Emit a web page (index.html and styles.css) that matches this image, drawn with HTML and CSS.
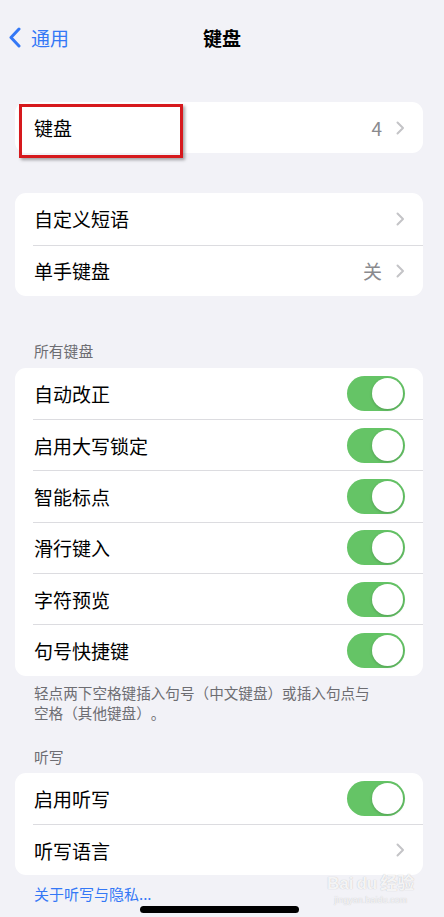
FILE: index.html
```html
<!DOCTYPE html>
<html lang="zh-CN">
<head>
  <meta charset="UTF-8" />
  <meta name="viewport" content="width=device-width, initial-scale=1" />
  <title>键盘</title>
  <link rel="stylesheet" href="styles.css">
</head>
<body>
  <header class="nav">
    <a class="back" href="#">
      <svg width="13" height="21" viewBox="0 0 13 21"><path d="M11 2 L3 10.5 L11 19" fill="none" stroke="#3478f6" stroke-width="3" stroke-linecap="round" stroke-linejoin="round"/></svg>
      <span>通用</span>
    </a>
    <h1>键盘</h1>
    <span></span>
  </header>

  <section class="group first">
    <div class="row">
      <span class="label">键盘</span>
      <span class="value">4</span>
      <svg class="chev" width="9" height="14" viewBox="0 0 9 14"><path d="M1.5 1.5 L7 7 L1.5 12.5" fill="none" stroke="#c4c4c7" stroke-width="2" stroke-linecap="round" stroke-linejoin="round"/></svg>
    </div>
    <div class="mark"></div>
  </section>

  <section class="group spaced">
    <div class="row">
      <span class="label">自定义短语</span>
      <svg class="chev" width="9" height="14" viewBox="0 0 9 14"><path d="M1.5 1.5 L7 7 L1.5 12.5" fill="none" stroke="#c4c4c7" stroke-width="2" stroke-linecap="round" stroke-linejoin="round"/></svg>
    </div>
    <div class="row">
      <span class="label">单手键盘</span>
      <span class="value">关</span>
      <svg class="chev" width="9" height="14" viewBox="0 0 9 14"><path d="M1.5 1.5 L7 7 L1.5 12.5" fill="none" stroke="#c4c4c7" stroke-width="2" stroke-linecap="round" stroke-linejoin="round"/></svg>
    </div>
  </section>

  <h2 class="section-title">所有键盘</h2>
  <section class="group">
    <div class="row"><span class="label">自动改正</span><span class="toggle"></span></div>
    <div class="row"><span class="label">启用大写锁定</span><span class="toggle"></span></div>
    <div class="row"><span class="label">智能标点</span><span class="toggle"></span></div>
    <div class="row"><span class="label">滑行键入</span><span class="toggle"></span></div>
    <div class="row"><span class="label">字符预览</span><span class="toggle"></span></div>
    <div class="row"><span class="label">句号快捷键</span><span class="toggle"></span></div>
  </section>
  <p class="note">轻点两下空格键插入句号（中文键盘）或插入句点与<br>空格（其他键盘）。</p>

  <h2 class="section-title after-note">听写</h2>
  <section class="group">
    <div class="row"><span class="label">启用听写</span><span class="toggle"></span></div>
    <div class="row">
      <span class="label">听写语言</span>
      <svg class="chev" width="9" height="14" viewBox="0 0 9 14"><path d="M1.5 1.5 L7 7 L1.5 12.5" fill="none" stroke="#c4c4c7" stroke-width="2" stroke-linecap="round" stroke-linejoin="round"/></svg>
    </div>
  </section>
  <a class="link" href="#">关于听写与隐私...</a>

  <div class="watermark">
    <span class="wm-logo">Bai<b>du</b>经验</span>
    <span class="wm-url">jingyan.baidu.com</span>
  </div>
  <div class="home"></div>
</body>
</html>
```

FILE: styles.css
```css
body {
  margin: 0;
  width: 444px;
  min-height: 917px;
  position: relative;
  background-color: #f2f2f7;
  color: #000;
  font-family: "Noto Sans CJK SC", "Noto Sans", sans-serif;
  font-size: 19px;
  overflow: hidden;
  text-spacing-trim: space-all;
}
.nav {
  height: 74px;
  display: grid;
  grid-template-columns: 1fr auto 1fr;
  align-items: center;
}
.back {
  display: flex;
  align-items: center;
  gap: 10px;
  padding-left: 8px;
  color: #3478f6;
  text-decoration: none;
  font-size: 19px;
}
.nav h1 {
  margin: 0;
  font-size: 19px;
  font-weight: 600;
}
.group {
  position: relative;
  margin: 0 21px 0 15px;
  background: #fff;
  border-radius: 11px;
}
.group.first {
  margin-top: 28px;
}
.group.spaced {
  margin-top: 40px;
}
.row {
  height: 51.3px;
  margin-left: 18px;
  padding: 0 18px 0 1px;
  display: flex;
  align-items: center;
  box-sizing: border-box;
}
.row + .row {
  border-top: 1px solid #dcdce0;
}
.label {
  flex: 1;
}
.value {
  color: #8a8a8e;
  margin-right: 14px;
}
.chev {
  display: block;
}
.toggle {
  position: relative;
  width: 58px;
  height: 35px;
  border-radius: 18px;
  background: #65c466;
}
.toggle::after {
  content: "";
  position: absolute;
  top: 2px;
  right: 2px;
  width: 31px;
  height: 31px;
  border-radius: 50%;
  background: #fff;
  box-shadow: 0 1px 3px rgba(0, 0, 0, 0.2);
}
.mark {
  position: absolute;
  left: 4px;
  top: 2px;
  width: 164px;
  height: 54px;
  box-sizing: border-box;
  border: 3px solid #d6191d;
  box-shadow: 2px 2px 3px rgba(0, 0, 0, 0.35);
}
.section-title {
  margin: 45px 0 7px;
  padding: 0 34px;
  font-size: 14.8px;
  font-weight: 400;
  line-height: 20px;
  color: #6d6d72;
}
.section-title.after-note {
  margin-top: 24px;
  margin-bottom: 6px;
}
.note {
  margin: 7px 0 0;
  padding: 0 34px;
  font-size: 14.6px;
  line-height: 20px;
  color: #6d6d72;
  font-feature-settings: "chws" 0, "halt" 0;
}
.link {
  display: block;
  margin-top: 9px;
  padding-left: 34px;
  font-size: 15px;
  line-height: 20px;
  color: #3478f6;
  text-decoration: none;
}
.home {
  position: absolute;
  left: 140px;
  bottom: 4px;
  width: 159px;
  height: 7px;
  border-radius: 4px;
  background: #000;
}
.watermark {
  position: absolute;
  left: 327px;
  top: 874px;
  display: flex;
  flex-direction: column;
  align-items: center;
  color: rgba(255, 255, 255, 0.85);
  text-shadow: 0 0 1px rgba(0, 0, 0, 0.25);
  font-family: "Liberation Sans", "Noto Sans CJK SC", sans-serif;
}
.wm-logo {
  font-size: 17px;
  font-weight: 700;
  line-height: 20px;
}
.wm-logo b {
  margin: 0 3px;
}
.wm-url {
  font-size: 9px;
  line-height: 12px;
}
```
